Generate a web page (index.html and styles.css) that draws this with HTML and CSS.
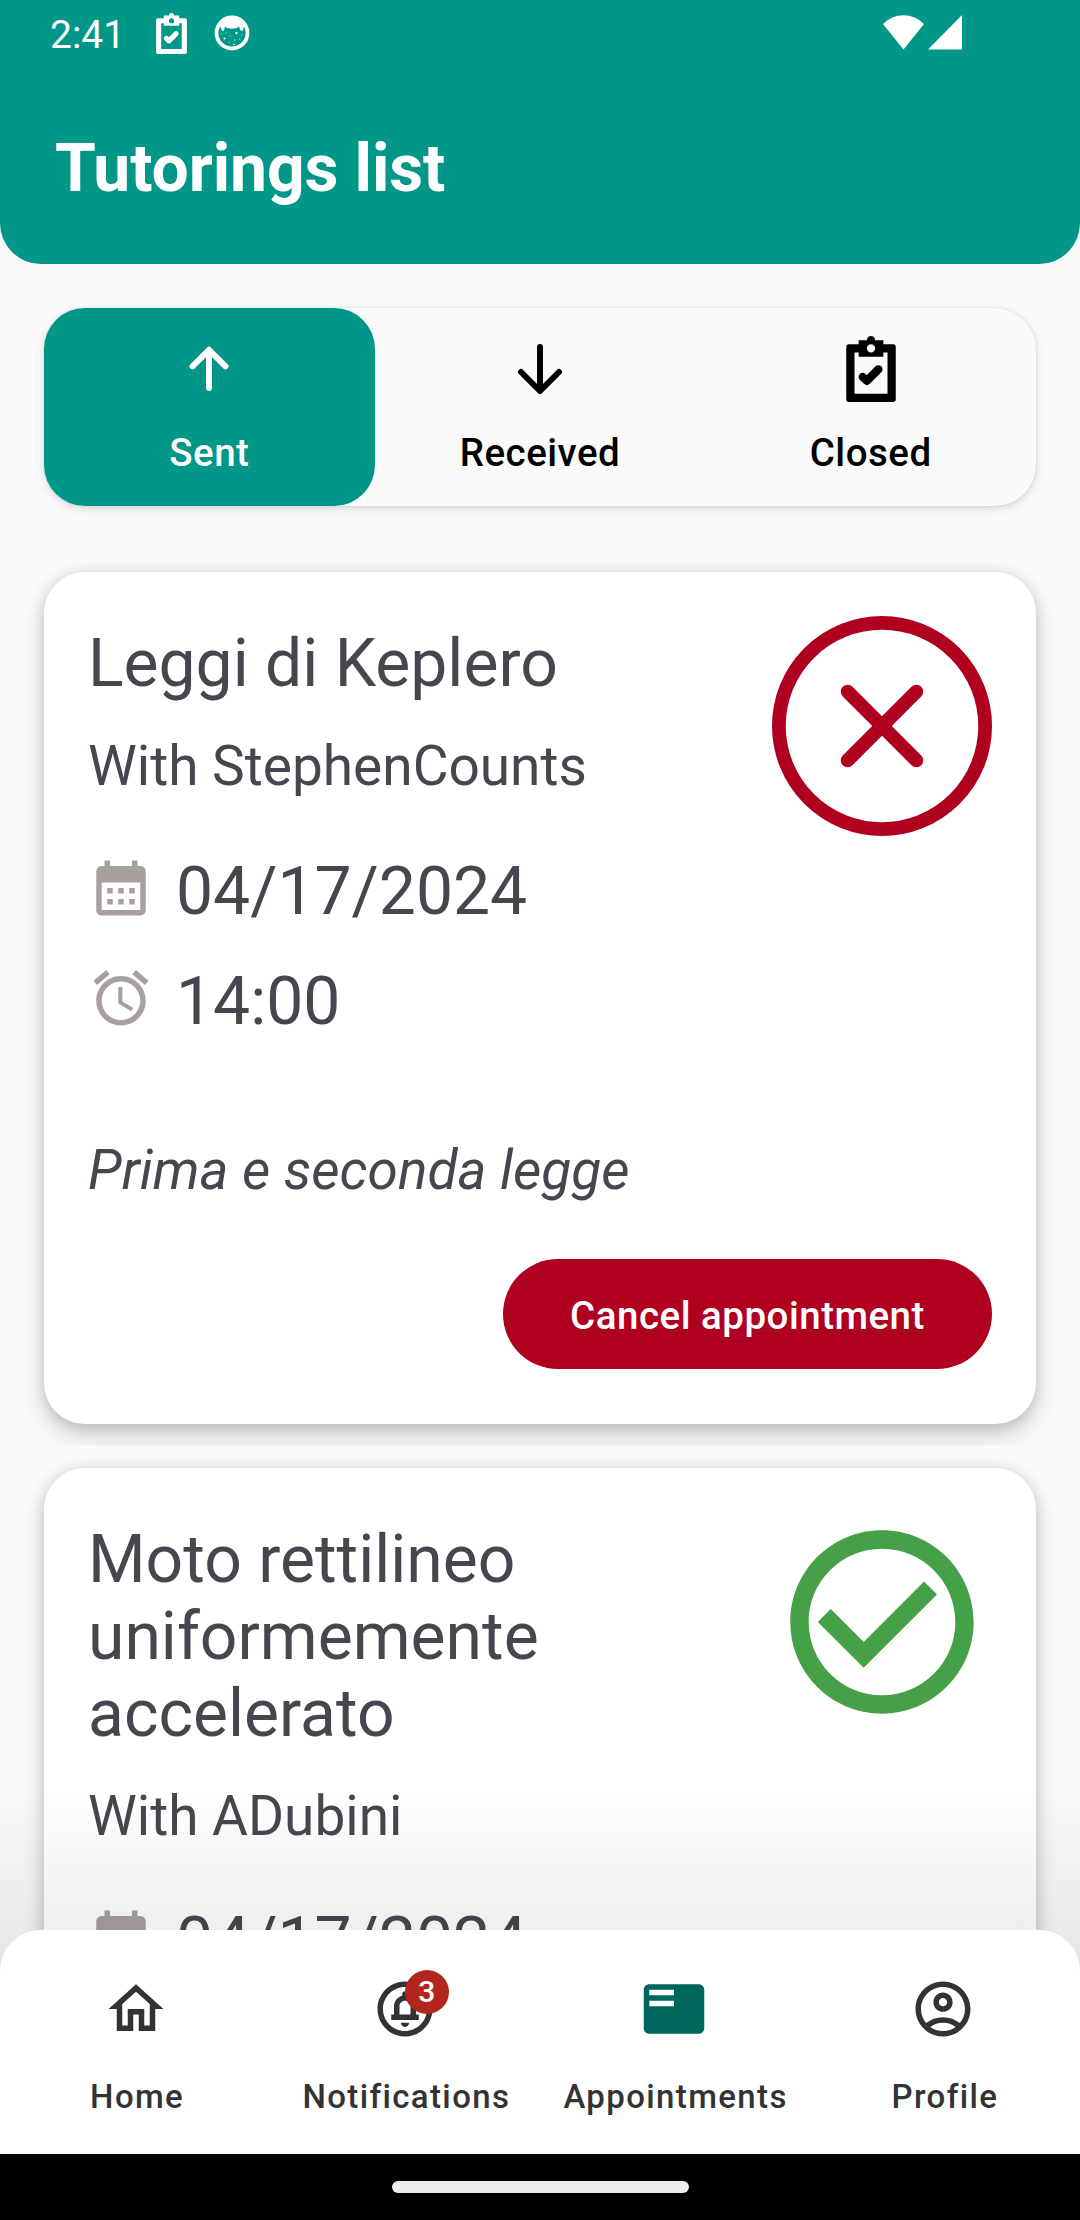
FILE: index.html
```html
<!DOCTYPE html>
<html lang="en">
<head>
<meta charset="utf-8">
<title>Tutorings list</title>
<link rel="stylesheet" href="styles.css">
</head>
<body>
<svg class="defs" aria-hidden="true">
  <symbol id="clipboard" viewBox="0 0 18 24">
    <path fill="currentColor" fill-rule="evenodd" d="M1 3H4.500V1.500H7.500A1.500 1.500 0 0 1 10.500 1.500H13.500V3H17a1 1 0 0 1 1 1V23a1 1 0 0 1-1 1H1a1 1 0 0 1-1-1V4a1 1 0 0 1 1-1zM3 6V21H15V6H13.500V7.500H4.500V6zM9 3a1.500 1.500 0 1 0 0 3 1.500 1.500 0 0 0 0-3z"/>
    <path fill="none" stroke="currentColor" stroke-width="3" stroke-linecap="round" stroke-linejoin="round" d="M6 14.900 7.500 16.300 11.700 12.100"/>
  </symbol>
  <symbol id="calendar" viewBox="0 0 24 24">
    <path fill="currentColor" d="M19 4h-1V2h-2v2H8V2H6v2H5c-1.110 0-1.990.9-1.990 2L3 20c0 1.100.89 2 2 2h14c1.100 0 2-.9 2-2V6c0-1.100-.9-2-2-2zm0 16H5V10h14v10zM9 14H7v-2h2v2zm4 0h-2v-2h2v2zm4 0h-2v-2h2v2zm-8 4H7v-2h2v2zm4 0h-2v-2h2v2zm4 0h-2v-2h2v2z"/>
  </symbol>
</svg>
<div class="screen">
  <header class="header">
    <div class="status">
      <span class="time">2:41</span>
      <svg class="status-clip"><use href="#clipboard"/></svg>
      <svg class="status-cat" viewBox="0 0 36 36">
        <circle cx="18" cy="18" r="15.500" fill="none" stroke="#fff" stroke-width="3.800"/>
        <path fill="#fff" d="M5 9C8 4 13 1 18 1s10 3 13 8l-1 3-1.500 4-2-.5-1.500-4-2 1.500-5 .8-5-.8-2-1.500-1 4-2 .5L6.500 12z"/>
        <g fill="#fff"><circle cx="7" cy="19" r=".5"/><circle cx="12" cy="18" r=".6"/><circle cx="22.500" cy="18" r="1.200"/><circle cx="28" cy="20" r=".5"/><circle cx="10.500" cy="23.500" r="1"/><circle cx="16" cy="21" r=".5"/><circle cx="20.500" cy="25" r=".7"/><circle cx="25.500" cy="24" r=".5"/><circle cx="15" cy="27" r=".5"/><circle cx="20" cy="29.500" r=".8"/></g>
      </svg>
      <svg class="signals" viewBox="0 0 80 36">
        <path fill="#fff" d="M0 10A28.500 28.500 0 0 1 41 10L20.500 35.500zM45 35.500 79 1V35.500z"/>
      </svg>
    </div>
    <h1 class="title">Tutorings list</h1>
  </header>

  <div class="tabs">
    <div class="tab tab-active">
      <svg class="tab-icon arrow" viewBox="0 0 66 66"><path d="M33 52V14M16.500 30.300 33 13.800 49.500 30.300"/></svg>
      <span>Sent</span>
    </div>
    <div class="tab">
      <svg class="tab-icon arrow" viewBox="0 0 66 66"><path d="M33 11V55M14 36 33 55 52 36"/></svg>
      <span>Received</span>
    </div>
    <div class="tab">
      <svg class="tab-icon"><use href="#clipboard"/></svg>
      <span>Closed</span>
    </div>
  </div>

  <main class="list">
    <section class="item">
      <article class="card">
        <div class="top">
          <div class="info">
            <h2 class="subject">Leggi di Keplero</h2>
            <p class="person">With StephenCounts</p>
            <div class="when"><svg class="when-icon"><use href="#calendar"/></svg><span>04/17/2024</span></div>
            <div class="when"><svg class="when-icon" viewBox="0 0 24 24"><path fill="currentColor" d="M22 5.720l-4.600-3.860-1.290 1.530 4.600 3.860L22 5.720zM7.880 3.390L6.600 1.860 2 5.710l1.290 1.530 4.590-3.850zM12.500 8H11v6l4.750 2.850.75-1.230-4-2.370V8zM12 4c-4.970 0-9 4.030-9 9s4.020 9 9 9c4.970 0 9-4.030 9-9s-4.030-9-9-9zm0 16c-3.870 0-7-3.130-7-7s3.130-7 7-7 7 3.130 7 7-3.130 7-7 7z"/></svg><span>14:00</span></div>
          </div>
          <svg class="state declined" viewBox="0 0 16 16"><circle cx="8" cy="8" r="7.500"/><path d="M5.500 5.500l5 5M10.500 5.500l-5 5"/></svg>
        </div>
        <p class="note">Prima e seconda legge</p>
        <button class="cancel">Cancel appointment</button>
      </article>
    </section>
    <section class="item">
      <article class="card">
        <div class="top">
          <div class="info">
            <h2 class="subject">Moto rettilineo uniformemente accelerato</h2>
            <p class="person">With ADubini</p>
            <div class="when"><svg class="when-icon"><use href="#calendar"/></svg><span>04/17/2024</span></div>
          </div>
          <svg class="state accepted" viewBox="0 0 24 24"><path d="M16.590 7.580L10 14.170l-3.590-3.580L5 12l5 5 8-8zM12 2C6.480 2 2 6.480 2 12s4.480 10 10 10 10-4.480 10-10S17.520 2 12 2zm0 18c-4.420 0-8-3.580-8-8s3.580-8 8-8 8 3.580 8 8-3.580 8-8 8z"/></svg>
        </div>
      </article>
    </section>
  </main>

  <div class="dock">
    <nav class="nav">
      <div class="nav-item">
        <svg class="nav-icon" viewBox="0 0 24 24"><path d="M12 5.690l5 4.500V18h-2v-6H9v6H7v-7.810l5-4.500M12 3L2 12h3v8h6v-6h2v6h6v-8h3L12 3z"/></svg>
        <span class="nav-label">Home</span>
      </div>
      <div class="nav-item">
        <div class="badged">
          <svg class="nav-icon" viewBox="0 0 24 24"><path d="M13.500 17c0 .83-.67 1.500-1.500 1.500s-1.500-.67-1.500-1.500h3zM12 2C6.480 2 2 6.480 2 12s4.480 10 10 10 10-4.480 10-10S17.520 2 12 2zm0 18c-4.410 0-8-3.590-8-8s3.590-8 8-8 8 3.590 8 8-3.590 8-8 8zm4-9v3h1v2H7v-2h1v-3c0-1.860 1.280-3.410 3-3.860V6.500c0-.55.45-1 1-1s1 .45 1 1v.64c1.720.45 3 2 3 3.860zm-2 0c0-1.100-.9-2-2-2s-2 .9-2 2v3h4v-3z"/></svg>
          <span class="badge">3</span>
        </div>
        <span class="nav-label">Notifications</span>
      </div>
      <div class="nav-item">
        <svg class="nav-icon nav-active" viewBox="0 0 24 24"><path d="M21 3H3c-1.100 0-2 .9-2 2v14c0 1.100.9 2 2 2h18c1.100 0 2-.9 2-2V5c0-1.100-.9-2-2-2zm-9 8H3V9h9v2zm0-4H3V5h9v2z"/></svg>
        <span class="nav-label">Appointments</span>
      </div>
      <div class="nav-item">
        <svg class="nav-icon" viewBox="0 0 24 24"><path d="M12 2C6.480 2 2 6.480 2 12s4.480 10 10 10 10-4.480 10-10S17.520 2 12 2zM7.350 18.500C8.660 17.560 10.260 17 12 17s3.340.56 4.650 1.500C15.340 19.440 13.740 20 12 20s-3.340-.56-4.650-1.500zm10.790-1.380C16.450 15.800 14.320 15 12 15s-4.450.8-6.140 2.120C4.700 15.730 4 13.950 4 12c0-4.420 3.580-8 8-8s8 3.580 8 8c0 1.950-.7 3.730-1.860 5.120zM12 6c-1.930 0-3.500 1.570-3.500 3.500S10.070 13 12 13s3.500-1.570 3.500-3.500S13.930 6 12 6zm0 5c-.83 0-1.500-.67-1.500-1.500S11.170 8 12 8s1.500.67 1.500 1.500S12.830 11 12 11z"/></svg>
        <span class="nav-label">Profile</span>
      </div>
    </nav>
    <div class="gesture"><span class="handle"></span></div>
  </div>
</div>
</body>
</html>
```
FILE: styles.css
```css
* { box-sizing: border-box; margin: 0; padding: 0; }
body { font-family: Roboto, "Liberation Sans", sans-serif; background: #fafafa; }
.defs { display: none; }
svg { display: block; flex: none; }

.screen {
  position: relative;
  width: 1080px;
  height: 2220px;
  overflow: hidden;
  display: flex;
  flex-direction: column;
  background: #fafafa;
}

.header {
  flex: none;
  height: 264px;
  background: #009688;
  border-radius: 0 0 41px 41px;
  color: #fff;
}
.status { display: flex; align-items: flex-start; height: 130px; padding: 0 117px 0 50px; }
.time { width: 106px; padding-top: 2px; font-size: 39px; line-height: 66px; }
.status-clip { width: 31px; height: 41px; margin-top: 13px; }
.status-cat { width: 36px; height: 36px; margin: 15px 0 0 27px; }
.signals { width: 80px; height: 36px; margin: 14px 0 0 auto; }
.title { padding-left: 55px; font-size: 66px; line-height: 77px; font-weight: 700; letter-spacing: -.12px; }

.tabs {
  flex: none;
  display: grid;
  grid-template-columns: repeat(3, 1fr);
  height: 198px;
  margin: 44px 44px 0;
  border-radius: 41px;
  background: #fafafa;
  box-shadow: 0 3px 8px rgba(0, 0, 0, .13), 0 0 2px rgba(0, 0, 0, .14);
}
.tab {
  display: flex;
  flex-direction: column;
  align-items: center;
  gap: 23px;
  padding-top: 28px;
  border-radius: 41px;
  font-size: 38.5px;
  line-height: 55px;
  font-weight: 500;
  letter-spacing: .5px;
  color: #000;
}
.tab-active { background: #009688; color: #fff; }
.tab-icon { width: 66px; height: 66px; }
.arrow { fill: none; stroke: currentColor; stroke-width: 6; stroke-linecap: round; stroke-linejoin: round; }

/* The list runs under the dock's rounded top corners and stops there. */
.list { flex: 1; min-height: 0; margin: 44px 0 249px; overflow: hidden; }
.item { padding: 22px 44px; overflow: hidden; }
.card {
  display: flex;
  flex-direction: column;
  height: 852px;
  padding: 44px 44px 55px;
  border-radius: 41px;
  background: #fff;
  color: #49454f;
  box-shadow: 0 11px 22px rgba(0, 0, 0, .2), 0 0 14px rgba(0, 0, 0, .1);
}
.top { display: flex; justify-content: space-between; }
.info { width: 560px; padding-top: 9px; }
.subject { font-size: 66px; line-height: 77px; font-weight: 400; }
.person { margin: 31px 0 54px; font-size: 55px; line-height: 66px; }
.when { display: flex; gap: 22px; margin-bottom: 33px; font-size: 66px; line-height: 77px; }
.when-icon { width: 66px; height: 66px; margin-top: 1.5px; color: #a8a09f; }
.state { width: 220px; height: 220px; }
.declined { fill: none; stroke: #b00020; stroke-width: 1; stroke-linecap: round; }
.accepted { fill: #45a048; }
.note { margin-top: 64px; font-size: 55px; line-height: 66px; font-style: italic; }
.cancel {
  align-self: flex-end;
  width: 489px;
  height: 110px;
  margin-top: auto;
  padding-top: 2px;
  border: 0;
  border-radius: 55px;
  background: #b00020;
  color: #fff;
  font: 500 38.5px/55px Roboto, "Liberation Sans", sans-serif;
  letter-spacing: .5px;
}

.dock { position: absolute; left: 0; right: 0; bottom: 0; padding-top: 140px; background: linear-gradient(rgba(0, 0, 0, 0), rgba(0, 0, 0, .085) 185px); }
.nav {
  display: grid;
  grid-template-columns: repeat(4, 1fr);
  height: 224px;
  padding: 46px 2px 0 1px;
  border-radius: 41px 41px 0 0;
  background: #fff;
}
.nav-item {
  display: flex;
  flex-direction: column;
  align-items: center;
  gap: 33px;
  font-size: 33px;
  line-height: 44px;
  font-weight: 500;
  letter-spacing: 1.375px;
  color: #333;
}
.nav-label { padding-left: 3px; }
.nav-icon { width: 66px; height: 66px; fill: #333; }
.nav-active { fill: #00655b; }
.badged { position: relative; }
.badge {
  position: absolute;
  left: 33px;
  top: -6px;
  width: 44px;
  height: 44px;
  border-radius: 50%;
  background: #b3261e;
  color: #fff;
  font-size: 30px;
  letter-spacing: 0;
  text-align: center;
}
.gesture { display: flex; justify-content: center; height: 66px; padding-top: 27px; background: #000; }
.handle { width: 297px; height: 12px; border-radius: 6px; background: #ececec; }
```
